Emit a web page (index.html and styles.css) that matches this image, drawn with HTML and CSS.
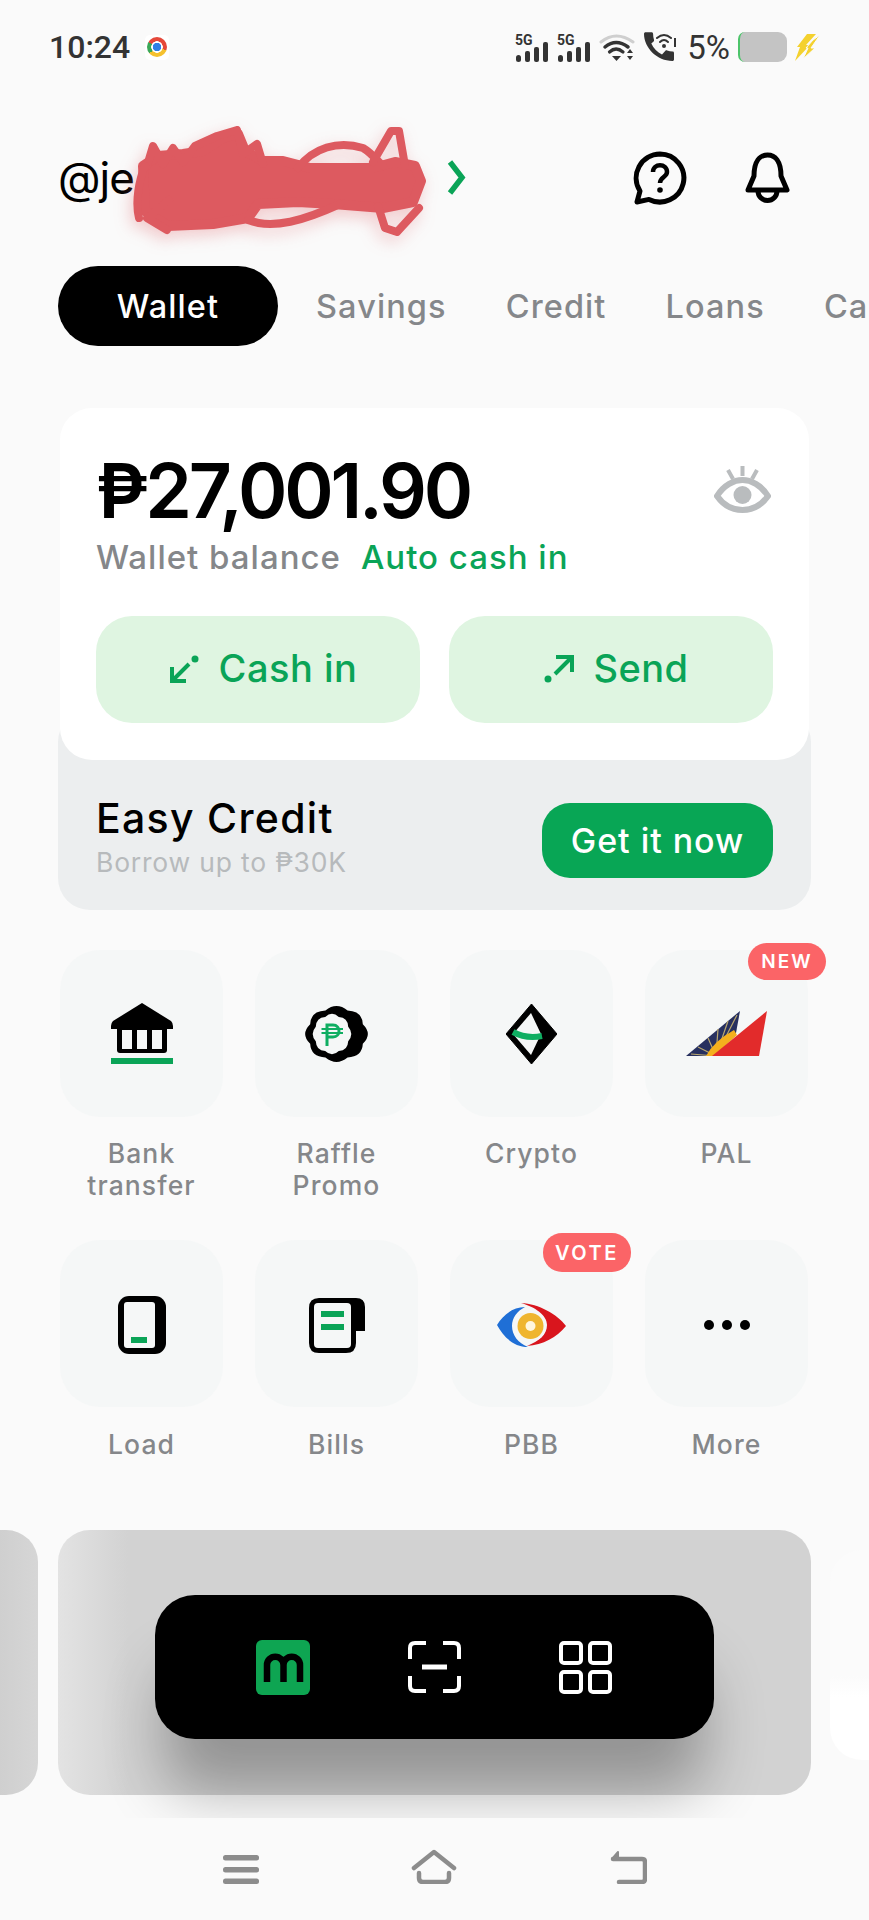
FILE: index.html
```html
<!DOCTYPE html>
<html lang="en">
<head>
  <meta charset="UTF-8" />
  <meta name="viewport" content="width=device-width, initial-scale=1.0" />
  <title>Wallet</title>
  <link rel="stylesheet" href="styles.css">
</head>
<body>
  <!-- status bar -->
  <div class="status">
    <div class="status-left">
      <span class="clock">10:24</span>
      <span class="chrome"><span class="chrome-ball"></span></span>
    </div>
    <div class="status-right">
      <svg class="sig" width="34" height="29" viewBox="0 0 34 29"><text x="0" y="12" class="sig-text">5G</text><rect x="1" y="22" width="5" height="7" rx="2.5"/><rect x="10" y="18" width="5" height="11" rx="2"/><rect x="19" y="14" width="5" height="15" rx="2"/><rect x="28" y="9" width="5" height="20" rx="2"/></svg>
      <svg class="sig" width="34" height="29" viewBox="0 0 34 29"><text x="0" y="12" class="sig-text">5G</text><rect x="1" y="22" width="5" height="7" rx="2.5"/><rect x="10" y="18" width="5" height="11" rx="2"/><rect x="19" y="14" width="5" height="15" rx="2"/><rect x="28" y="9" width="5" height="20" rx="2"/></svg>
      <svg width="36" height="29" viewBox="0 0 36 29" fill="none" stroke-linecap="round"><path d="M2 9Q17 -3 34 9" stroke="#cfcfcf" stroke-width="3"/><path d="M6 14Q17 5 29 14" stroke="#333" stroke-width="3.5"/><path d="M10.500 19Q17 13 24 19" stroke="#333" stroke-width="3.200"/><path d="M13 23H22L17.500 28Z" fill="#333"/><path d="M28 20L31 16L34 20ZM28 23L31 27L34 23Z" fill="#333"/></svg>
      <svg width="36" height="30" viewBox="0 0 36 30"><path d="M8.300 11.500c2.300 4.800 6 8.700 10.700 11l3.400-3.700c.4-.5 1.100-.6 1.700-.4 1.800.6 3.700 1 5.600 1 .9 0 1.300.7 1.300 1.600v6.500c0 .9-.7 1.500-1.600 1.500C14.200 29 1 16 1 1.800 1 .9 1.700.3 2.600.3h5.900c.9 0 1.600.7 1.600 1.600 0 2 .3 4 .9 5.900.2.600 0 1.200-.4 1.700z" fill="#333"/><g fill="none" stroke="#333" stroke-width="2" stroke-linecap="round"><path d="M14 6Q21 0 28 6"/><path d="M17 10Q21 6 25 10"/></g><circle cx="21" cy="14" r="2" fill="#333"/><rect x="31" y="6" width="2" height="9" fill="#333"/></svg>
      <span class="pct">5%</span>
      <span class="battery"></span>
      <svg width="25" height="27" viewBox="0 0 25 27"><path d="M12 0H21L11 11H15L0 27L5 13H2Z" fill="#f4d12e"/><path d="M18 6L25 1L16 14H20L8 25L13 14H11Z" fill="#f4d12e" stroke="#fafafa" stroke-width="1"/></svg>
    </div>
  </div>

  <!-- account header -->
  <div class="header">
    <div class="handle-box">
      <span class="handle">@je</span>
      <svg class="chevron" width="19" height="35" viewBox="0 0 19 35" fill="none"><path d="M3 2L15 17.500L3 33" stroke="#0aa457" stroke-width="5.500"/></svg>
      <svg class="scribble" width="297" height="110" viewBox="0 0 297 110">
        <path d="M10 40L25 30L50 28L70 25L90 12L105 8L112 25L130 35L150 35L177 42L240 42L262 36L282 40L288 55L280 76L250 82L200 78L165 76L125 78L115 92L80 98L35 100L12 85Z" fill="#dd5a60" stroke="#dd5a60" stroke-width="10" stroke-linejoin="round"/>
        <g fill="none" stroke="#dd5a60" stroke-width="8" stroke-linecap="round" stroke-linejoin="round">
          <path d="M14 40L20 20L30 38L40 22L50 36L62 20L84 10L104 4L110 28L124 18L130 38"/>
          <path d="M165 42C180 22 205 14 230 22C240 28 245 36 250 40"/>
          <path d="M240 36L258 5L266 5L272 40"/>
          <path d="M6 92C2 76 6 54 12 40"/>
          <path d="M34 104L14 92L36 74"/>
          <path d="M115 94C140 104 172 94 207 78"/>
          <path d="M245 80L252 102L264 106L286 82"/>
        </g>
      </svg>
    </div>
    <div class="header-icons">
      <svg width="54" height="54" viewBox="0 0 54 54" fill="none"><path d="M27 3A24 24 0 1 1 16 48.400L4 51L7 40A24 24 0 0 1 27 3Z" stroke="#000" stroke-width="5" stroke-linejoin="round"/><path d="M20 21C20 12 34 12 34 21C34 26 27 26 27 32" stroke="#000" stroke-width="4.500"/><circle cx="27" cy="39" r="2.800" fill="#000"/></svg>
      <svg width="45" height="52" viewBox="0 0 45 52" fill="none" stroke="#000" stroke-width="5" stroke-linejoin="round"><path d="M3 38L9 24C9 9 15 3 22.500 3C30 3 36 9 36 24L42 38Z"/><path d="M13 39A9.500 9.500 0 0 0 32 39"/></svg>
    </div>
  </div>

  <!-- tabs -->
  <div class="tabs">
    <span class="tab active">Wallet</span>
    <span class="tab">Savings</span>
    <span class="tab">Credit</span>
    <span class="tab">Loans</span>
    <span class="tab">Ca</span>
  </div>

  <!-- balance card -->
  <div class="wallet">
    <div class="balance-card">
      <div class="balance-row">
        <div class="amount">₱27,001.90</div>
        <svg class="eye" width="57" height="47" viewBox="0 0 57 47" fill="none" stroke="#b9bcbe" stroke-width="6"><path d="M3 30C10 19 20 14 28.500 14C37 14 47 19 54 30C47 40 37 44 28.500 44C20 44 10 40 3 30Z"/><circle cx="28.500" cy="29" r="9" fill="#b9bcbe" stroke="none"/><path d="M28.500 0V10M14 4L19 13M43 4L38 13" stroke-width="4"/></svg>
      </div>
      <div class="balance-label"><span>Wallet balance</span><span class="auto">Auto cash in</span></div>
      <div class="actions">
        <div class="action">
          <svg width="31" height="29" viewBox="0 0 31 29" fill="none" stroke="#0aa457" stroke-width="4"><path d="M3 13V27H17M3 27L20 10"/><circle cx="26" cy="5" r="3.500" fill="#0aa457" stroke="none"/></svg>
          <span>Cash in</span>
        </div>
        <div class="action">
          <svg width="31" height="29" viewBox="0 0 31 29" fill="none" stroke="#0aa457" stroke-width="4"><path d="M13 3H29V18M29 3L12 20"/><circle cx="5" cy="25" r="3.500" fill="#0aa457" stroke="none"/></svg>
          <span>Send</span>
        </div>
      </div>
    </div>
    <div class="credit">
      <div class="credit-text">
        <div class="credit-title">Easy Credit</div>
        <div class="credit-sub">Borrow up to ₱30K</div>
      </div>
      <div class="credit-btn">Get it now</div>
    </div>
  </div>

  <!-- services -->
  <div class="services">
    <div class="service">
      <div class="tile">
        <svg width="62" height="61" viewBox="0 0 62 61"><path d="M31 0L60 18Q62 20 62 23V26H0V23Q0 20 2 18Z"/><rect x="6" y="22" width="50" height="28" rx="3"/><path d="M11 27h10v19h-10zM26 27h10v19h-10zM41 27h10v19h-10z" fill="#f5f7f7"/><rect y="55" width="62" height="6" fill="#0aa457"/></svg>
      </div>
      <div class="label">Bank<br>transfer</div>
    </div>
    <div class="service">
      <div class="tile">
        <svg width="65" height="58" viewBox="0 0 65 58"><path transform="translate(32.500 29) scale(.325 .29)" d="M81 -34Q112 0 81 34Q79 79 34 81Q0 112 -34 81Q-79 79 -81 34Q-112 0 -81 -34Q-79 -79 -34 -81Q0 -112 34 -81Q79 -79 81 -34Z"/><path transform="translate(28 29) scale(.2 .21)" d="M81 -34Q112 0 81 34Q79 79 34 81Q0 112 -34 81Q-79 79 -81 34Q-112 0 -81 -34Q-79 -79 -34 -81Q0 -112 34 -81Q79 -79 81 -34Z" fill="#f5f7f7"/><g fill="none" stroke="#0fae62" stroke-width="3"><path d="M23 41V20H29C37 20 37 32 29 32H23"/><path d="M17.500 24H39M17.500 28H39" stroke-width="2"/></g></svg>
      </div>
      <div class="label">Raffle<br>Promo</div>
    </div>
    <div class="service">
      <div class="tile">
        <svg width="51" height="60" viewBox="0 0 51 60"><path d="M25.500 0L51 30L25.500 60L0 30Z" stroke="#000" stroke-width="1" stroke-linejoin="round"/><path d="M25 9L7 30L25 51L35 30Z" fill="#f5f7f7"/><path d="M7 28Q20 35 36 32" fill="none" stroke="#0fae62" stroke-width="6"/></svg>
      </div>
      <div class="label">Crypto</div>
    </div>
    <div class="service">
      <div class="tile">
        <svg width="81" height="45" viewBox="0 0 81 45"><path d="M0 45L54 0L50 22L28 45Z" fill="#27305f"/><g stroke="#b9a770" stroke-width="1.200"><path d="M30 45L5 43M30 45L12 36M30 45L22 27M30 45L32 18M30 45L42 10M30 45L51 4"/></g><path d="M20 45Q28 30 48 19L51 24L28 45Z" fill="#f4b01e"/><path d="M81 0L73 45H26Z" fill="#e22b2b"/></svg>
      </div>
      <span class="badge">NEW</span>
      <div class="label">PAL</div>
    </div>
    <div class="service">
      <div class="tile">
        <svg class="low" width="48" height="58" viewBox="0 0 48 58"><rect width="48" height="58" rx="11"/><rect x="6" y="6" width="31" height="46" rx="3" fill="#f5f7f7"/><rect x="13" y="41" width="16" height="6" fill="#0aa457"/></svg>
      </div>
      <div class="label">Load</div>
    </div>
    <div class="service">
      <div class="tile">
        <svg class="low" width="56" height="55" viewBox="0 0 56 55"><path d="M10 0H47Q56 0 56 9V33H47V45Q47 55 37 55H10Q0 55 0 45V10Q0 0 10 0Z"/><rect x="5" y="5" width="37" height="45" rx="4" fill="#f5f7f7"/><rect x="12" y="13" width="23" height="6" fill="#0aa457"/><rect x="12" y="26" width="23" height="6" fill="#0aa457"/></svg>
      </div>
      <div class="label">Bills</div>
    </div>
    <div class="service">
      <div class="tile">
        <svg class="low" width="69" height="45" viewBox="0 0 69 45"><path d="M0 22C6 12 16 4 28 4C20 8 15 15 15 23C15 32 21 40 31 44C16 44 6 33 0 22Z" fill="#1f6fd6"/><path d="M24 0C42 1 60 11 69 23C60 34 46 42 30 43C42 38 50 32 50 22C50 12 38 4 24 0Z" fill="#d9151d"/><circle cx="33.500" cy="23" r="15.500" fill="#f5f7f7"/><circle cx="33.500" cy="23" r="13" fill="#efb52f"/><circle cx="33.500" cy="23" r="5" fill="#fff6dd"/></svg>
      </div>
      <span class="badge badge-vote">VOTE</span>
      <div class="label">PBB</div>
    </div>
    <div class="service">
      <div class="tile">
        <svg class="low" width="46" height="10" viewBox="0 0 46 10"><circle cx="5" cy="5" r="5"/><circle cx="23" cy="5" r="5"/><circle cx="41" cy="5" r="5"/></svg>
      </div>
      <div class="label">More</div>
    </div>
  </div>

  <!-- promo banner and floating bar -->
  <div class="banners">
    <div class="banner-side left"></div>
    <div class="banner-main">
      <div class="float-bar">
        <svg width="54" height="55" viewBox="0 0 54 55"><rect width="54" height="55" rx="6" fill="#0ea552"/><path d="M11 42V25A8 8 0 0 1 27.500 25V42M27.500 25A8 8 0 0 1 44 25V42" fill="none" stroke="#000" stroke-width="6.500"/></svg>
        <svg width="53" height="52" viewBox="0 0 53 52" fill="none" stroke="#fff" stroke-width="4"><path d="M18 2H7Q2 2 2 7V18M35 2H46Q51 2 51 7V18M2 35V45Q2 50 7 50H18M51 35V45Q51 50 46 50H35"/><path d="M14 26H39" stroke-width="5"/></svg>
        <svg width="53" height="53" viewBox="0 0 53 53" fill="none" stroke="#fff" stroke-width="4"><rect x="2" y="2" width="20" height="20" rx="3"/><rect x="31" y="2" width="20" height="20" rx="3"/><rect x="2" y="31" width="20" height="20" rx="3"/><rect x="31" y="31" width="20" height="20" rx="3"/></svg>
      </div>
    </div>
    <div class="banner-side right"></div>
  </div>

  <!-- android nav -->
  <div class="nav">
    <svg class="nav-menu" width="36" height="29" viewBox="0 0 36 29" fill="#8c8c8c"><rect width="36" height="5.500" rx="2.500"/><rect y="12" width="36" height="5.500" rx="2.500"/><rect y="23.500" width="36" height="5.500" rx="2.500"/></svg>
    <svg width="46" height="35" viewBox="0 0 46 35" fill="none" stroke="#8c8c8c" stroke-width="4.500" stroke-linecap="round" stroke-linejoin="round"><path d="M3 19L23 3L43 19"/><path d="M8 24V29Q8 33 12 33H34Q38 33 38 29V24"/></svg>
    <svg width="38" height="35" viewBox="0 0 38 35" fill="none" stroke="#8c8c8c" stroke-width="4.500" stroke-linecap="round" stroke-linejoin="round"><path d="M4 10H33Q36 10 36 13V30Q36 33 33 33H10"/><path d="M9 3L3 10H9Z" fill="#8c8c8c" stroke-width="2"/></svg>
  </div>
</body>
</html>
```

FILE: styles.css
```css
html, body { margin: 0; padding: 0; }
body { width: 869px; height: 1920px; overflow: hidden; background: #fafafa; font-family: 'Inter', 'Noto Sans', sans-serif; color: #000; }
svg { display: block; flex: none; }

.status { height: 94px; display: flex; align-items: center; justify-content: space-between; padding: 0 49px; }
.status-left { display: flex; align-items: center; gap: 15px; }
.clock { font-family: 'Roboto', sans-serif; font-size: 32px; font-weight: 500; color: #333; }
.chrome { width: 24px; height: 25px; background: #fff; border-radius: 5px; display: flex; align-items: center; justify-content: center; }
.chrome-ball { width: 20px; height: 20px; border-radius: 50%; background: radial-gradient(circle, #2f7fe6 0 4px, #fff 4.500px 5.500px, transparent 6px), conic-gradient(#e5483a 0 110deg, #f5c12e 110deg 230deg, #3aa757 230deg 300deg, #e5483a 300deg); }
.status-right { display: flex; align-items: center; gap: 8px; }
.sig { fill: #333; }
.sig-text { font-family: 'Roboto', sans-serif; font-size: 14px; font-weight: 700; }
.pct { font-family: 'Roboto', sans-serif; font-size: 33px; color: #333; }
.battery { width: 49px; height: 30px; border-radius: 7px 9px 9px 7px; background: #c4c4c4; border-left: 2px solid #4cc46a; box-sizing: border-box; }

.header { height: 172px; display: flex; align-items: center; justify-content: space-between; padding: 0 79px 5px 58px; box-sizing: border-box; }
.handle-box { position: relative; width: 408px; display: flex; align-items: center; justify-content: space-between; }
.handle { font-size: 44px; letter-spacing: -1px; line-height: 50px; color: #000; }
.scribble { position: absolute; left: 75px; top: -27px; filter: drop-shadow(-3px 6px 8px rgba(221, 90, 96, 0.3)); }
.header-icons { display: flex; align-items: center; gap: 58px; }

.tabs { display: flex; align-items: center; padding-left: 58px; white-space: nowrap; height: 80px; }
.tab { flex: none; font-size: 32.500px; letter-spacing: 1.100px; font-weight: 500; color: #85878a; margin-right: 59px; }
.tab:last-child { margin-right: 0; }
.tab.active { background: #000; color: #fff; width: 220px; height: 80px; border-radius: 40px; display: flex; align-items: center; justify-content: center; margin-right: 38px; }

.wallet { margin: 62px 58px 0; }
.balance-card { position: relative; z-index: 1; margin: 0 2px; background: #fff; border-radius: 32px; padding: 38px 36px 37px; height: 352px; box-sizing: border-box; }
.balance-row { display: flex; justify-content: space-between; align-items: flex-start; }
.amount { font-size: 75px; font-weight: 600; letter-spacing: -3.200px; line-height: 90px; }
.eye { margin-top: 20px; margin-right: 2px; }
.balance-label { display: flex; gap: 20px; font-size: 33px; letter-spacing: 1px; font-weight: 500; color: #85878a; line-height: 40px; margin-top: 1px; }
.auto { color: #0aa457; }
.actions { display: grid; grid-template-columns: 324px 324px; gap: 29px; margin-top: 39px; }
.action { height: 107px; background: #dff5e1; border-radius: 36px; display: flex; align-items: center; justify-content: center; gap: 19px; padding: 0 0 3px 10px; box-sizing: border-box; font-size: 38px; letter-spacing: 0.500px; font-weight: 500; color: #0aa457; }

.credit { margin-top: -50px; background: #eceeef; border-radius: 32px; padding: 93px 38px 32px 38px; display: flex; align-items: center; justify-content: space-between; }
.credit-text { align-self: flex-start; margin-top: -7px; }
.credit-title { font-size: 41px; font-weight: 500; letter-spacing: 1.300px; line-height: 44px; margin-bottom: 6px; }
.credit-sub { font-size: 26.500px; letter-spacing: 0.800px; color: #b7babc; line-height: 32px; }
.credit-btn { width: 231px; height: 75px; border-radius: 28px; background: #08a655; color: #fff; font-size: 34px; letter-spacing: 0.950px; font-weight: 500; display: flex; align-items: center; justify-content: center; }

.services { margin-top: 40px; padding-left: 60px; display: grid; grid-template-columns: repeat(4, 163px); grid-template-rows: 252px auto; column-gap: 32px; row-gap: 38px; }
.service { position: relative; }
.tile { height: 167px; background: #f5f7f7; border-radius: 40px; display: flex; align-items: center; justify-content: center; }
.low { margin-top: 3px; }
.label { margin: 20px -10px 0; text-align: center; font-size: 26.500px; letter-spacing: 1.100px; font-weight: 500; line-height: 32px; color: #85878a; }
.service:nth-child(n+5) .label { margin-top: 21px; }
.badge { position: absolute; right: -18px; top: -7px; width: 78px; height: 37px; border-radius: 19px; background: #fb6467; color: #fff; font-size: 19px; font-weight: 600; letter-spacing: 2px; display: flex; align-items: center; justify-content: center; }
.badge-vote { right: -18px; width: 88px; top: -7px; height: 39px; font-size: 20px; letter-spacing: 2.500px; }

.banners { margin-top: 70px; display: flex; gap: 20px; height: 265px; }
.banner-side { width: 38px; flex: none; background: #d2d2d2; }
.banner-side.left { border-radius: 0 32px 32px 0; background: linear-gradient(90deg, #cfcfcf, #d6d6d6); }
.banner-side.right { width: 39px; margin-left: -1px; background: linear-gradient(180deg, #fbfbfb 0 60%, #fff 70%); border-radius: 32px 0 0 32px; margin-top: 20px; height: 210px; }
.banner-main { position: relative; width: 753px; flex: none; background: linear-gradient(90deg, #e3e3e3, #d2d2d2 70px); border-radius: 32px; }
.float-bar { position: absolute; left: 97px; top: 65px; width: 559px; height: 144px; background: #000; border-radius: 40px; display: flex; align-items: center; justify-content: center; gap: 98px; padding-right: 1px; box-sizing: border-box; box-shadow: 0 62px 60px -10px rgba(0, 0, 0, 0.3); }

.nav { position: relative; z-index: 2; margin-top: 23px; height: 102px; background: #fafafa; padding-top: 31px; box-sizing: border-box; display: flex; justify-content: center; align-items: flex-start; gap: 152px; }
.nav-menu { margin-top: 6px; }
```
